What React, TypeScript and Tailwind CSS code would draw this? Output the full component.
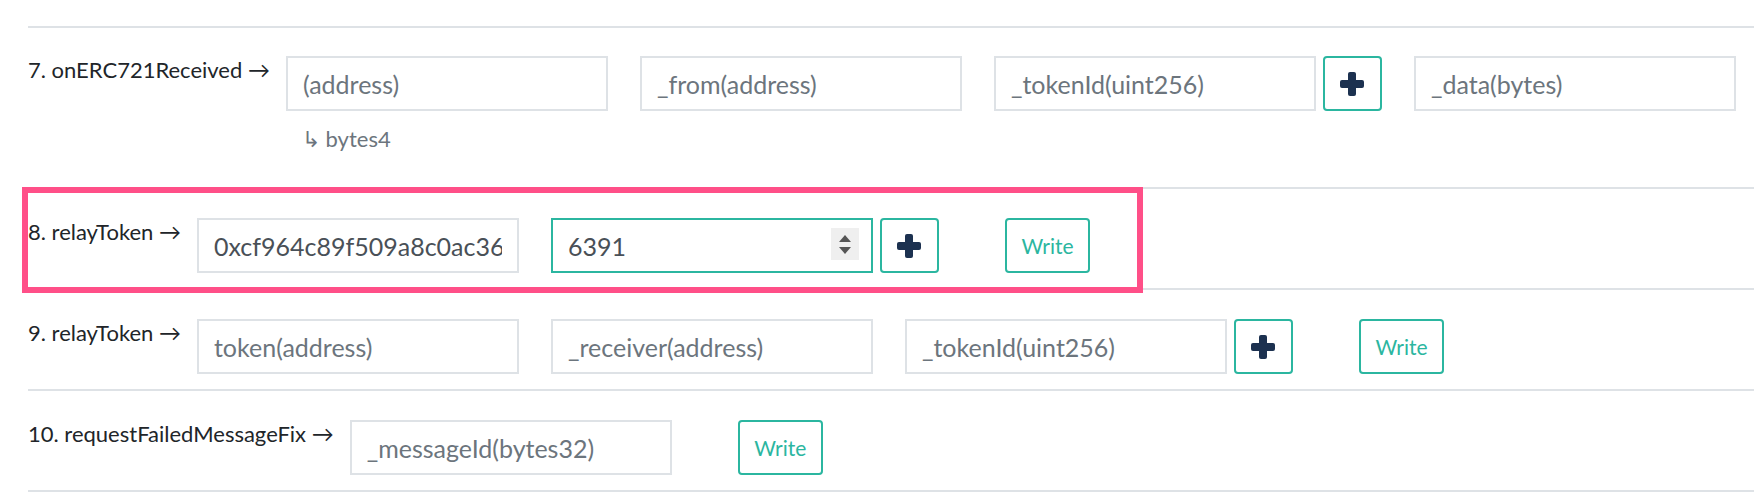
import type {ReactNode} from 'react';

const font = {fontFamily: 'Lato, "Open Sans", sans-serif'};

function Field({placeholder, value, active}: {placeholder: string; value?: string; active?: boolean}) {
  return (
    <input
      readOnly
      placeholder={placeholder}
      defaultValue={value}
      style={font}
      className={
        'w-[322px] h-[55px] shrink-0 border-2 bg-white px-[15px] text-[25px] text-[#495057] placeholder:text-[#6c757d] outline-none ' +
        (active ? 'border-[#2bb6a0]' : 'border-[#dee2e6]')
      }
    />
  );
}

function NumberField({value}: {value: string}) {
  return (
    <div className="relative shrink-0">
      <Field placeholder="_tokenId(uint256)" value={value} active />
      <div className="absolute right-[14px] top-[10px] w-[28px] h-[32px] bg-[#efefef] flex flex-col items-center justify-center gap-[5px]">
        <div className="w-0 h-0 border-x-[6px] border-x-transparent border-b-[7px] border-b-[#555]" />
        <div className="w-0 h-0 border-x-[6px] border-x-transparent border-t-[7px] border-t-[#555]" />
      </div>
    </div>
  );
}

function PlusButton() {
  return (
    <button className="ml-[7px] w-[59px] h-[55px] shrink-0 border-2 border-[#2bb6a0] rounded-[4px] bg-white flex items-center justify-center">
      <svg width="26" height="26" viewBox="0 0 26 26">
        <rect x="9" y="1" width="8" height="24" rx="2" fill="#1c3150" />
        <rect x="1" y="9" width="24" height="8" rx="2" fill="#1c3150" />
      </svg>
    </button>
  );
}

function WriteButton() {
  return (
    <button
      style={font}
      className="ml-[66px] w-[85px] h-[55px] shrink-0 border-2 border-[#2bb6a0] rounded-[4px] bg-white text-[21px] text-[#2bb6a0]"
    >
      Write
    </button>
  );
}

function Row({label, children, first}: {label: string; children: ReactNode; first?: boolean}) {
  return (
    <div
      className={
        'border-t-2 border-[#dee2e6] flex items-start ' + (first ? 'pt-[28px] pb-[35px]' : 'pt-[29px] pb-[15px]')
      }
    >
      <div style={font} className="mr-[16px] text-[22px] leading-[28px] text-[#212529] whitespace-nowrap">
        {label}
      </div>
      {children}
    </div>
  );
}

export default function App() {
  return (
    <div className="relative w-[1754px] h-[494px] overflow-hidden bg-white pt-[26px] pl-[28px]">
      <Row label="7. onERC721Received →" first>
        <div className="flex flex-col">
          <div className="flex items-start gap-[32px]">
            <Field placeholder="(address)" />
            <Field placeholder="_from(address)" />
            <div className="flex">
              <Field placeholder="_tokenId(uint256)" />
              <PlusButton />
            </div>
            <Field placeholder="_data(bytes)" />
          </div>
          <div style={font} className="mt-[14px] pl-[16px] h-[27px] text-[22px] leading-[27px] text-[#6c757d]">
            ↳ bytes4
          </div>
        </div>
      </Row>

      <Row label="8. relayToken →">
        <div className="flex items-start gap-[32px]">
          <Field placeholder="token(address)" value="0xcf964c89f509a8c0ac36391c5460df2d6fd6a2b7" />
          <div className="flex">
            <NumberField value="6391" />
            <PlusButton />
          </div>
        </div>
        <WriteButton />
      </Row>

      <Row label="9. relayToken →">
        <div className="flex items-start gap-[32px]">
          <Field placeholder="token(address)" />
          <Field placeholder="_receiver(address)" />
          <div className="flex">
            <Field placeholder="_tokenId(uint256)" />
            <PlusButton />
          </div>
        </div>
        <WriteButton />
      </Row>

      <Row label="10. requestFailedMessageFix →">
        <Field placeholder="_messageId(bytes32)" />
        <WriteButton />
      </Row>
      <div className="border-t-2 border-[#dee2e6]" />

      {/* highlight drawn over row 8 */}
      <div className="pointer-events-none absolute left-[22px] top-[187px] w-[1121px] h-[106px] border-[6px] border-[#ff4f88]" />
    </div>
  );
}
